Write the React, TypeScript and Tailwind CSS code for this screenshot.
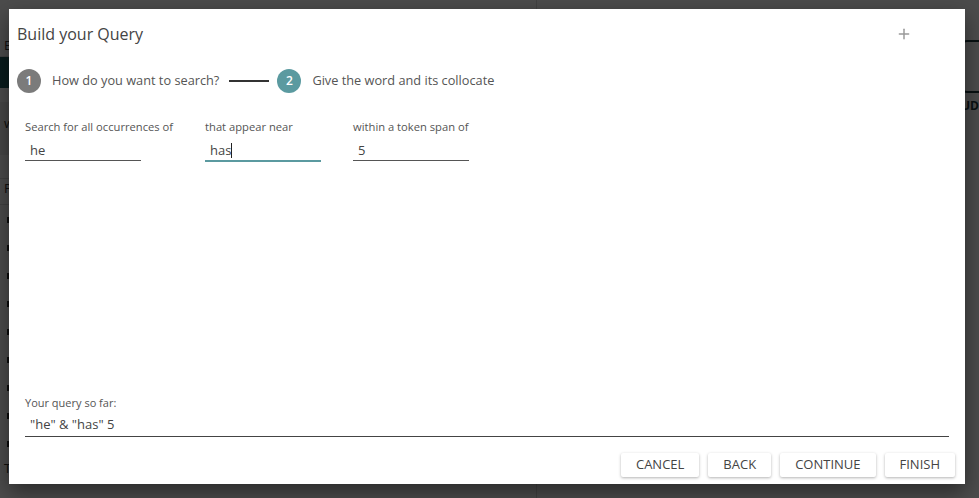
import { Plus } from 'lucide-react';

const font = { fontFamily: '"Open Sans", "Noto Sans", sans-serif' };

function Field({ label, value, focused }: { label: string; value: string; focused?: boolean }) {
  return (
    <div className="flex flex-col min-w-[116px]">
      <div className="text-[11.2px] leading-[15px] text-[#555] whitespace-nowrap">{label}</div>
      <div className="mt-[7px] w-[116px]">
        <div className="h-[18px] pl-[5px] text-[13px] leading-[18px] text-[#444] flex items-center">
          {value}
          {focused && <span className="inline-block w-px h-[15px] bg-[#222]" />}
        </div>
        <div className={focused ? 'mt-px h-[2px] bg-[#5b9aa0]' : 'mt-px h-px bg-[#555]'} />
      </div>
    </div>
  );
}

function Step({ n, label, active }: { n: number; label: string; active?: boolean }) {
  return (
    <div className="flex items-center">
      <div
        className={
          'w-6 h-6 rounded-full flex items-center justify-center text-white text-[12px] font-semibold ' +
          (active ? 'bg-[#5b9aa0]' : 'bg-[#7b7b7b]')
        }
      >
        {n}
      </div>
      <span className="ml-[11px] text-[12.75px] text-[#555]">{label}</span>
    </div>
  );
}

export default function App() {
  return (
    <div className="relative w-[979px] h-[498px] overflow-hidden bg-white" style={font}>
      {/* page behind the dialog */}
      <div className="flex h-full">
        <div className="w-[537px] border-r border-[#ddd] flex flex-col">
          <div className="h-[57px] border-b border-[#ddd] pl-1 pt-9 text-[13px] text-[#333]">E</div>
          <div className="h-[31px] bg-[#1f5a5e]" />
          <div className="mt-[14px] h-[53px] bg-[#eee] pl-1 pt-3 text-[13px] text-[#333]">wi</div>
          <div className="mt-[23px] h-[27px] border-y border-[#ddd] pl-1 text-[13px] text-[#333]">Pl</div>
          <div className="flex flex-col gap-[22px] pl-[7px] pt-[12px]">
            {Array.from({ length: 9 }).map((_, i) => (
              <div key={i} className="w-[3px] h-[6px] bg-[#222]" />
            ))}
          </div>
          <div className="mt-auto mb-5 pl-1 text-[13px] text-[#333]">Ty</div>
        </div>
        <div className="flex-1 flex flex-col items-end pr-0 pt-10">
          <div className="w-[40px] h-[53px] -mr-[20px] rounded-lg border-2 border-[#1f3b3f]" />
          <div className="mt-1 text-[12px] font-bold text-[#1f3b3f]">UD</div>
        </div>
      </div>
      <div className="absolute inset-0 bg-black/70" />

      {/* dialog */}
      <div className="absolute left-[9px] top-[9px] w-[956px] h-[475px] bg-white shadow-[0_8px_20px_rgba(0,0,0,0.45)] flex flex-col">
        <div className="flex items-center justify-between pl-2 pr-[53px] pt-[14px]">
          <h2 className="text-[16px] leading-[22px] text-[#444]">Build your Query</h2>
          <Plus className="w-[16px] h-[16px] text-[#999]" strokeWidth={2.2} />
        </div>

        <div className="flex items-center pl-2 mt-[24px]">
          <Step n={1} label="How do you want to search?" />
          <div className="w-[40px] h-[2px] bg-[#333] ml-[10px] mr-2" />
          <Step n={2} label="Give the word and its collocate" active />
        </div>

        <div className="flex gap-8 px-4 mt-[26px]">
          <Field label="Search for all occurrences of" value="he" />
          <Field label="that appear near" value="has" focused />
          <Field label="within a token span of" value="5" />
        </div>

        <div className="flex-1" />

        <div className="px-4">
          <div className="text-[11px] leading-[15px] text-[#555]">Your query so far:</div>
          <div className="mt-[5px] pl-[5px] text-[13px] leading-[18px] text-[#444]">"he" &amp; "has" 5</div>
          <div className="mt-[3px] h-px bg-[#444]" />
        </div>

        <div className="flex justify-end gap-[9px] pr-[10px] mt-4 mb-[7px]">
          {['CANCEL', 'BACK', 'CONTINUE', 'FINISH'].map((b) => (
            <button
              key={b}
              className="h-6 px-[15px] text-[13px] text-[#444] bg-white rounded-[2px] shadow-[0_1px_3px_rgba(0,0,0,0.3)]"
            >
              {b}
            </button>
          ))}
        </div>
      </div>
    </div>
  );
}
